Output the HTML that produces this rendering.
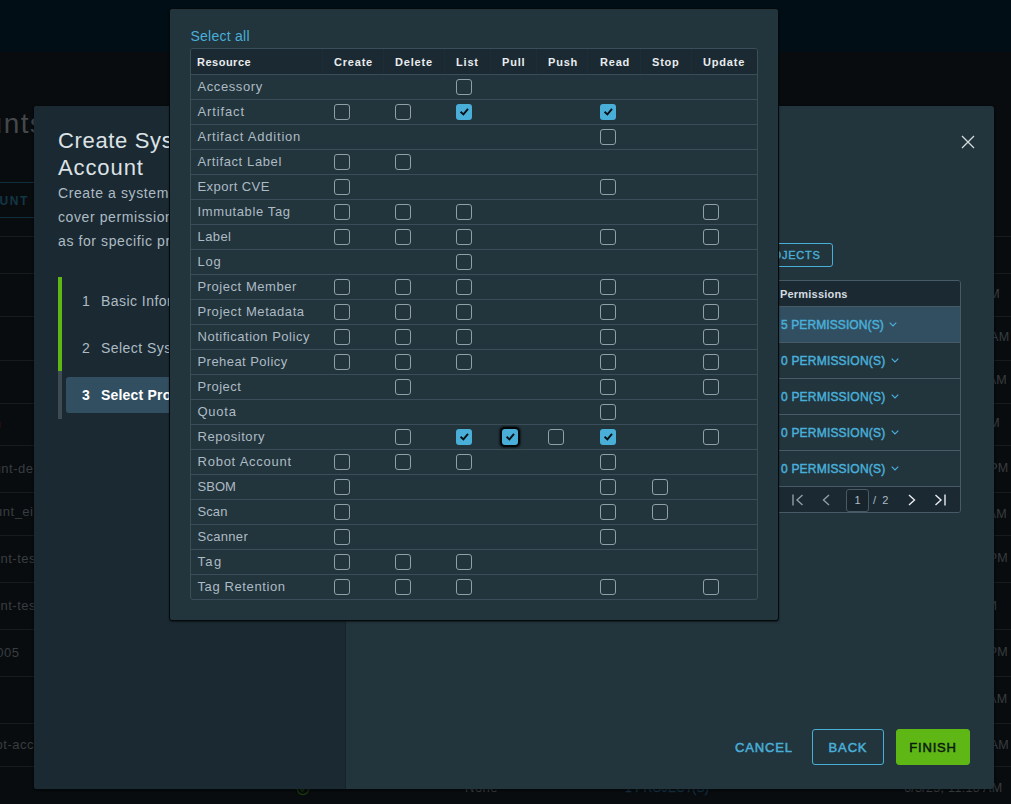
<!DOCTYPE html>
<html lang="en">
<head>
<meta charset="utf-8">
<title>Create System Robot Account</title>
<style>
*{box-sizing:border-box;margin:0;padding:0}
html,body{width:1011px;height:804px;overflow:hidden;background:#080c0f}
body{position:relative;font-family:"Liberation Sans",Arial,sans-serif;color:#adbbc4;-webkit-font-smoothing:antialiased}
.abs{position:absolute}
/* ---------- dimmed background page ---------- */
.hdr{left:0;top:0;width:1011px;height:52px;background:#010e15}
.bgline{left:0;width:1011px;height:1px;background:#151b1f}
.bgtxt{color:#383d40;font-size:13px;letter-spacing:.5px;white-space:nowrap;line-height:16px}
.bgtxt.r{text-align:right;letter-spacing:.3px;font-size:12.5px}
.bgtxt.l{text-align:right;margin-right:-.5px}
.bgh1{right:965.5px;top:104px;font-size:28px;line-height:40px;color:#45484a;font-weight:400;white-space:nowrap;letter-spacing:1.5px}
.bgbtn{left:-160px;top:182px;width:400px;height:36px;border:1px solid #11303d;border-radius:3px}
.bgbtn span{position:absolute;right:210px;top:11px;font-size:12px;letter-spacing:1.6px;color:#143645;font-weight:700;white-space:nowrap}
/* ---------- wizard ---------- */
.wiz{left:34px;top:106px;width:960px;height:683px;border-radius:3px;background:#22343c;overflow:hidden;box-shadow:0 1px 2px 1px rgba(0,0,0,.35)}
.wiz .nav{left:0;top:0;width:312px;height:683px;background:#1b2a32}
.wtitle{left:24px;top:21px;font-size:22px;line-height:27px;color:#dde2e6;letter-spacing:.9px;white-space:nowrap}
.wdesc{left:24px;top:75px;font-size:14px;line-height:24px;color:#adbbc4;letter-spacing:.6px;white-space:nowrap}
.bar-g{left:24px;top:171px;width:4px;height:94px;background:#5eb715}
.bar-x{left:24px;top:265px;width:4px;height:48px;background:#3f4b52}
.step{left:48px;font-size:14px;line-height:20px;color:#adbbc4;letter-spacing:.45px;white-space:nowrap}
.step b{display:inline-block;width:19px;font-weight:400}
.step.act{left:32px;top:271px;width:400px;height:36px;background:#324f61;border-radius:3px;color:#fff;font-weight:700;padding:8px 0 0 16px;letter-spacing:.2px}
.step.act b{font-weight:700}
.close{left:927px;top:29px;width:14px;height:14px}
.btn-sm{left:600px;top:137px;width:199px;height:24px;border:1px solid #49afd9;border-radius:3px;color:#49afd9;font-size:11px;font-weight:400;-webkit-text-stroke:.4px #49afd9;letter-spacing:.75px;line-height:22px;text-align:right;padding-right:11.5px;white-space:nowrap}
.dg{left:600px;top:174px;width:327px;height:233px;border:1px solid #495a67;border-radius:3px;background:#22343c;overflow:hidden}
.dg .h{left:0;top:0;width:327px;height:26px;background:#1b2a32;border-bottom:1px solid #495a67}
.dg .h span{position:absolute;left:145px;top:6px;font-size:11px;font-weight:700;color:#d5dce0;letter-spacing:.2px;line-height:14px}
.dg .r{left:0;width:327px;height:36px;border-top:1px solid #495a67}
.dg .r.sel{background:#324f61}
.dg .r span{position:absolute;left:146px;top:10px;font-size:12px;line-height:16px;font-weight:400;-webkit-text-stroke:.45px #49afd9;color:#49afd9;letter-spacing:.1px;white-space:nowrap}
.dg .r svg{position:absolute;left:255px;top:15px}
.dg .f{left:0;top:205px;width:327px;height:27px;background:#1b2a32;border-top:1px solid #495a67}
.pgin{left:211px;top:2px;width:23px;height:23px;border:1px solid #495a67;border-radius:3px;background:#17242b;color:#adbbc4;font-size:11px;line-height:21px;text-align:center}
.pgof{left:238px;top:5px;font-size:11px;line-height:16px;color:#adbbc4;letter-spacing:1.6px;white-space:nowrap}
.wbtn{top:623px;height:36px;border-radius:3px;font-size:13px;font-weight:400;-webkit-text-stroke:.5px currentColor;letter-spacing:.85px;line-height:35px;text-align:center;white-space:nowrap;border:1px solid transparent}
.cancel{left:690px;width:80px;color:#49afd9}
.back{left:778px;width:72px;border-color:#49afd9;color:#49afd9}
.finish{left:862px;width:74px;background:#5eb715;border-color:#5eb715;color:#0c1a10}
/* ---------- popover ---------- */
.pop{left:169px;top:8px;width:610px;height:613px;background:#22343c;border:1px solid #05090b;border-radius:3px;box-shadow:0 1px 2px rgba(0,0,0,.5)}
.selall{left:20.5px;top:18px;font-size:14px;line-height:18px;color:#49afd9;letter-spacing:.25px;white-space:nowrap}
.tbl{left:20px;top:39px;width:568px;height:552px;border:1px solid #3b4d58;border-radius:3px;overflow:hidden}
.th{left:0;top:0;width:566px;height:25px;background:#1b2a32}
.th span{position:absolute;top:6px;font-size:11px;font-weight:700;color:#e9ecef;line-height:14px;letter-spacing:.8px;white-space:nowrap}
.th i{position:absolute;top:0;width:1px;height:25px;background:#1d2d35}
.tr{left:0;width:566px;height:25px;border-top:1px solid #3b4d58}
.tr span{position:absolute;left:6.5px;top:4px;font-size:13px;line-height:16px;color:#adbbc4;white-space:nowrap;letter-spacing:.65px}
.cb{position:absolute;top:4px;width:16px;height:16px;border:1px solid #909fa8;border-radius:3px}
.cb.on{border:0;background:#49afd9}
.cb.on svg{position:absolute;left:0;top:0}
.cb.foc{box-shadow:0 0 0 2px #05080a,0 0 1.5px 2.5px rgba(5,8,10,.55)}
</style>
</head>
<body>

<div class="abs hdr"></div>
<div class="abs bgh1">System Robot Accounts</div>
<div class="abs bgbtn"><span>NEW ROBOT ACCOUNT</span></div>
<div class="abs" style="left:0;top:422px;width:1px;height:6px;background:#250d0f"></div>
<div class="abs bgline" style="top:236px"></div>
<div class="abs bgline" style="top:273px"></div>
<div class="abs bgline" style="top:316px"></div>
<div class="abs bgline" style="top:360px"></div>
<div class="abs bgline" style="top:403px"></div>
<div class="abs bgline" style="top:445px"></div>
<div class="abs bgline" style="top:492px"></div>
<div class="abs bgline" style="top:535px"></div>
<div class="abs bgline" style="top:582px"></div>
<div class="abs bgline" style="top:629px"></div>
<div class="abs bgline" style="top:676px"></div>
<div class="abs bgline" style="top:723px"></div>
<div class="abs bgline" style="top:766px"></div>
<div class="abs bgtxt l" style="right:978px;top:460.9px">robot-account-de</div>
<div class="abs bgtxt l" style="right:978px;top:504.4px">robot_account_ei</div>
<div class="abs bgtxt l" style="right:975.5px;top:551px">robot-account-tes</div>
<div class="abs bgtxt l" style="right:975.5px;top:597.6px">robot-account-tes</div>
<div class="abs bgtxt l" style="right:992px;top:645px">robot2005</div>
<div class="abs bgtxt l" style="right:977.5px;top:736.5px">robot-acc</div>
<div class="abs bgtxt r" style="right:11px;top:285.9px">6/9/25, 10:02 AM</div>
<div class="abs bgtxt r" style="right:1.6px;top:328.9px">6/9/25, 9:41 AM</div>
<div class="abs bgtxt r" style="right:4px;top:371.7px">6/6/25, 8:27 AM</div>
<div class="abs bgtxt r" style="right:11px;top:415.1px">6/5/25, 7:30 PM</div>
<div class="abs bgtxt r" style="right:2.5px;top:460.2px">6/5/25, 4:12 PM</div>
<div class="abs bgtxt r" style="right:4px;top:505.5px">6/5/25, 11:50 AM</div>
<div class="abs bgtxt r" style="right:3px;top:550.3px">6/4/25, 3:33 PM</div>
<div class="abs bgtxt r" style="right:13.7px;top:597.5px">6/4/25, 9:05 AM</div>
<div class="abs bgtxt r" style="right:3px;top:644.2px">6/3/25, 6:20 PM</div>
<div class="abs bgtxt r" style="right:3.6px;top:691.4px">6/3/25, 11:44 AM</div>
<div class="abs bgtxt r" style="right:2px;top:736.5px">6/3/25, 11:31 AM</div>
<div class="abs bgtxt r" style="right:8.6px;top:779.9px">6/3/25, 11:18 AM</div>
<div class="abs bgtxt" style="left:465px;top:780px">None</div>
<div class="abs bgtxt" style="left:625px;top:780px;color:#133040;font-size:12px;-webkit-text-stroke:.3px #133040;letter-spacing:.15px">1 PROJECT(S)</div>
<svg class="abs" style="left:296px;top:782px" width="14" height="14" viewBox="0 0 14 14"><circle cx="7" cy="7" r="5.6" fill="none" stroke="#1a3a0a" stroke-width="1.2"/><path d="M4.3 7.2l2 2 3.4-4" fill="none" stroke="#1a3a0a" stroke-width="1.2"/></svg>
<div class="abs wiz">
<div class="abs nav"></div><div class="abs" style="left:311px;top:0;width:1px;height:683px;background:#17232a"></div>
<div class="abs wtitle"><span style="letter-spacing:.65px">Create System Robot</span><br>Account</div>
<div class="abs wdesc">Create a system Robot Account that will<br>cover permissions for the system as well<br>as for specific projects</div>
<div class="abs bar-g"></div><div class="abs bar-x"></div>
<div class="abs step" style="top:185px"><b>1</b>Basic Information</div>
<div class="abs step" style="top:232px"><b>2</b>Select System Permissions</div>
<div class="abs step act"><b>3</b>Select Project Permissions</div>
<svg class="abs close" viewBox="0 0 14 14"><path d="M1 1L13 13M13 1L1 13" stroke="#d5dce0" stroke-width="1.25" fill="none"/></svg>
<div class="abs btn-sm">RESET ALL PROJECTS</div>
<div class="abs dg">
<div class="abs h"><span>Permissions</span></div>
<div class="abs r sel" style="top:25px"><span>5 PERMISSION(S)</span><svg style="left:254px" width="8" height="5" viewBox="0 0 8 5"><path d="M0.7 0.7L4 4 7.3 0.7" fill="none" stroke="#49afd9" stroke-width="1.2"/></svg></div>
<div class="abs r" style="top:61px"><span style="letter-spacing:.2px">0 PERMISSION(S)</span><svg style="left:256px" width="8" height="5" viewBox="0 0 8 5"><path d="M0.7 0.7L4 4 7.3 0.7" fill="none" stroke="#49afd9" stroke-width="1.2"/></svg></div>
<div class="abs r" style="top:97px"><span style="letter-spacing:.2px">0 PERMISSION(S)</span><svg style="left:256px" width="8" height="5" viewBox="0 0 8 5"><path d="M0.7 0.7L4 4 7.3 0.7" fill="none" stroke="#49afd9" stroke-width="1.2"/></svg></div>
<div class="abs r" style="top:133px"><span style="letter-spacing:.2px">0 PERMISSION(S)</span><svg style="left:256px" width="8" height="5" viewBox="0 0 8 5"><path d="M0.7 0.7L4 4 7.3 0.7" fill="none" stroke="#49afd9" stroke-width="1.2"/></svg></div>
<div class="abs r" style="top:169px"><span style="letter-spacing:.2px">0 PERMISSION(S)</span><svg style="left:256px" width="8" height="5" viewBox="0 0 8 5"><path d="M0.7 0.7L4 4 7.3 0.7" fill="none" stroke="#49afd9" stroke-width="1.2"/></svg></div>
<div class="abs f">
<svg class="abs" style="left:157px;top:7px" width="12" height="12" viewBox="0 0 12 12"><path d="M1 0.5V11.5M10.5 1L5 6l5.5 5" fill="none" stroke="#8e9da6" stroke-width="1.4"/></svg>
<svg class="abs" style="left:187px;top:7px" width="8" height="12" viewBox="0 0 8 12"><path d="M7 1L1.5 6 7 11" fill="none" stroke="#8e9da6" stroke-width="1.4"/></svg>
<div class="abs pgin">1</div><div class="abs pgof">/ 2</div>
<svg class="abs" style="left:273px;top:7px" width="8" height="12" viewBox="0 0 8 12"><path d="M1 1l5.5 5L1 11" fill="none" stroke="#e9ecef" stroke-width="1.4"/></svg>
<svg class="abs" style="left:299px;top:7px" width="12" height="12" viewBox="0 0 12 12"><path d="M11 0.5V11.5M1.5 1L7 6l-5.5 5" fill="none" stroke="#e9ecef" stroke-width="1.4"/></svg>
</div>
</div>
<div class="abs wbtn cancel">CANCEL</div><div class="abs wbtn back">BACK</div><div class="abs wbtn finish">FINISH</div>
</div>
<div class="abs pop">
<div class="abs selall">Select all</div>
<div class="abs tbl">
<div class="abs th"><span style="left:6px;letter-spacing:.5px">Resource</span><span style="left:143px">Create</span><span style="left:204px">Delete</span><span style="left:265px">List</span><span style="left:311px">Pull</span><span style="left:357px">Push</span><span style="left:409px">Read</span><span style="left:461px">Stop</span><span style="left:512px">Update</span><i style="left:131px"></i><i style="left:192px"></i><i style="left:253px"></i><i style="left:299px"></i><i style="left:345px"></i><i style="left:396px"></i><i style="left:449px"></i><i style="left:500px"></i></div>
<div class="abs tr" style="top:25px"><span style="letter-spacing:0.59px">Accessory</span><div class="cb" style="left:265px"></div></div>
<div class="abs tr" style="top:50px"><span style="letter-spacing:0.88px">Artifact</span><div class="cb" style="left:143px"></div><div class="cb" style="left:204px"></div><div class="cb on" style="left:265px"><svg width="16" height="16" viewBox="0 0 16 16"><path d="M4.6 7.7l2.8 2.7 4.6-5.6" fill="none" stroke="#0b1216" stroke-width="1.9"/></svg></div><div class="cb on" style="left:409px"><svg width="16" height="16" viewBox="0 0 16 16"><path d="M4.6 7.7l2.8 2.7 4.6-5.6" fill="none" stroke="#0b1216" stroke-width="1.9"/></svg></div></div>
<div class="abs tr" style="top:75px"><span style="letter-spacing:0.78px">Artifact Addition</span><div class="cb" style="left:409px"></div></div>
<div class="abs tr" style="top:100px"><span style="letter-spacing:0.61px">Artifact Label</span><div class="cb" style="left:143px"></div><div class="cb" style="left:204px"></div></div>
<div class="abs tr" style="top:125px"><span style="letter-spacing:0.44px">Export CVE</span><div class="cb" style="left:143px"></div><div class="cb" style="left:409px"></div></div>
<div class="abs tr" style="top:150px"><span style="letter-spacing:0.62px">Immutable Tag</span><div class="cb" style="left:143px"></div><div class="cb" style="left:204px"></div><div class="cb" style="left:265px"></div><div class="cb" style="left:512px"></div></div>
<div class="abs tr" style="top:175px"><span style="letter-spacing:0.42px">Label</span><div class="cb" style="left:143px"></div><div class="cb" style="left:204px"></div><div class="cb" style="left:265px"></div><div class="cb" style="left:409px"></div><div class="cb" style="left:512px"></div></div>
<div class="abs tr" style="top:200px"><span style="letter-spacing:0.8px">Log</span><div class="cb" style="left:265px"></div></div>
<div class="abs tr" style="top:225px"><span style="letter-spacing:0.54px">Project Member</span><div class="cb" style="left:143px"></div><div class="cb" style="left:204px"></div><div class="cb" style="left:265px"></div><div class="cb" style="left:409px"></div><div class="cb" style="left:512px"></div></div>
<div class="abs tr" style="top:250px"><span style="letter-spacing:0.55px">Project Metadata</span><div class="cb" style="left:143px"></div><div class="cb" style="left:204px"></div><div class="cb" style="left:265px"></div><div class="cb" style="left:409px"></div><div class="cb" style="left:512px"></div></div>
<div class="abs tr" style="top:275px"><span style="letter-spacing:0.52px">Notification Policy</span><div class="cb" style="left:143px"></div><div class="cb" style="left:204px"></div><div class="cb" style="left:265px"></div><div class="cb" style="left:409px"></div><div class="cb" style="left:512px"></div></div>
<div class="abs tr" style="top:300px"><span style="letter-spacing:0.45px">Preheat Policy</span><div class="cb" style="left:143px"></div><div class="cb" style="left:204px"></div><div class="cb" style="left:265px"></div><div class="cb" style="left:409px"></div><div class="cb" style="left:512px"></div></div>
<div class="abs tr" style="top:325px"><span style="letter-spacing:0.49px">Project</span><div class="cb" style="left:204px"></div><div class="cb" style="left:409px"></div><div class="cb" style="left:512px"></div></div>
<div class="abs tr" style="top:350px"><span style="letter-spacing:0.74px">Quota</span><div class="cb" style="left:409px"></div></div>
<div class="abs tr" style="top:375px"><span style="letter-spacing:0.54px">Repository</span><div class="cb" style="left:204px"></div><div class="cb on" style="left:265px"><svg width="16" height="16" viewBox="0 0 16 16"><path d="M4.6 7.7l2.8 2.7 4.6-5.6" fill="none" stroke="#0b1216" stroke-width="1.9"/></svg></div><div class="cb on foc" style="left:311px"><svg width="16" height="16" viewBox="0 0 16 16"><path d="M4.6 7.7l2.8 2.7 4.6-5.6" fill="none" stroke="#0b1216" stroke-width="1.9"/></svg></div><div class="cb" style="left:357px"></div><div class="cb on" style="left:409px"><svg width="16" height="16" viewBox="0 0 16 16"><path d="M4.6 7.7l2.8 2.7 4.6-5.6" fill="none" stroke="#0b1216" stroke-width="1.9"/></svg></div><div class="cb" style="left:512px"></div></div>
<div class="abs tr" style="top:400px"><span style="letter-spacing:0.76px">Robot Account</span><div class="cb" style="left:143px"></div><div class="cb" style="left:204px"></div><div class="cb" style="left:265px"></div><div class="cb" style="left:409px"></div></div>
<div class="abs tr" style="top:425px"><span style="letter-spacing:0.03px">SBOM</span><div class="cb" style="left:143px"></div><div class="cb" style="left:409px"></div><div class="cb" style="left:461px"></div></div>
<div class="abs tr" style="top:450px"><span style="letter-spacing:0.09px">Scan</span><div class="cb" style="left:143px"></div><div class="cb" style="left:409px"></div><div class="cb" style="left:461px"></div></div>
<div class="abs tr" style="top:475px"><span style="letter-spacing:0.3px">Scanner</span><div class="cb" style="left:143px"></div><div class="cb" style="left:409px"></div></div>
<div class="abs tr" style="top:500px"><span style="letter-spacing:1.37px">Tag</span><div class="cb" style="left:143px"></div><div class="cb" style="left:204px"></div><div class="cb" style="left:265px"></div></div>
<div class="abs tr" style="top:525px"><span style="letter-spacing:0.61px">Tag Retention</span><div class="cb" style="left:143px"></div><div class="cb" style="left:204px"></div><div class="cb" style="left:265px"></div><div class="cb" style="left:409px"></div><div class="cb" style="left:512px"></div></div>
</div>
</div>
</body>
</html>
